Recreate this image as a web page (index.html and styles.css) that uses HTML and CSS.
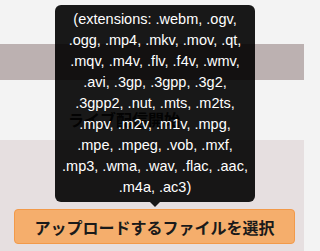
FILE: index.html
```html
<!DOCTYPE html>
<html lang="ja">
<head>
<meta charset="utf-8">
<link rel="stylesheet" href="styles.css">
</head>
<body>
<div class="page">
  <div class="top">
    <div class="band"></div>
    <h2 class="heading">ライブ配信開始</h2>
  </div>
  <div class="bottom">
    <button class="upload">アップロードするファイルを選択</button>
  </div>
  <div class="tooltip">(extensions: .webm, .ogv, .ogg, .mp4, .mkv, .mov, .qt, .mqv, .m4v, .flv, .f4v, .wmv, .avi, .3gp, .3gpp, .3g2, .3gpp2, .nut, .mts, .m2ts, .mpv, .m2v, .m1v, .mpg, .mpe, .mpeg, .vob, .mxf, .mp3, .wma, .wav, .flac, .aac, .m4a, .ac3)</div>
</div>
</body>
</html>
```

FILE: styles.css
```css
html, body {
  margin: 0;
  padding: 0;
}
body {
  width: 304px;
  height: 251px;
  overflow: hidden;
  background: #f3f3f3;
  font-family: "Liberation Sans", Arial, "Noto Sans CJK JP", sans-serif;
}
.page {
  position: relative;
  width: 304px;
  height: 251px;
  display: flex;
  flex-direction: column;
}
.top {
  height: 140px;
  display: flex;
  flex-direction: column;
}
.band {
  margin-top: 44px;
  height: 36px;
  background: #bcb1b1;
}
.heading {
  margin: 29px 0 0 68px;
  font-family: "Noto Sans CJK JP", sans-serif;
  font-size: 16px;
  font-weight: 700;
  line-height: 20px;
  color: #222;
}
.bottom {
  flex: 1;
  background: #e6dfe0;
  padding: 69px 9px 0 14px;
}
.upload {
  display: block;
  width: 100%;
  height: 35px;
  margin: 0;
  padding: 0;
  background: #f5ae6c;
  border: 1px solid #f29a4a;
  border-radius: 4px;
  font-family: "Noto Sans CJK JP", sans-serif;
  font-size: 16px;
  font-weight: 700;
  color: #1a1a1a;
}
.tooltip {
  position: absolute;
  left: 55px;
  top: 5px;
  width: 200px;
  box-sizing: border-box;
  padding: 4px 5px;
  background: rgba(0, 0, 0, 0.9);
  color: #fff;
  border-radius: 6px;
  font-size: 14.5px;
  line-height: 21px;
  text-align: center;
}
.tooltip::after {
  content: "";
  position: absolute;
  left: 95px;
  bottom: -5px;
  border-left: 5px solid transparent;
  border-right: 5px solid transparent;
  border-top: 5px solid rgba(0, 0, 0, 0.9);
}
```
